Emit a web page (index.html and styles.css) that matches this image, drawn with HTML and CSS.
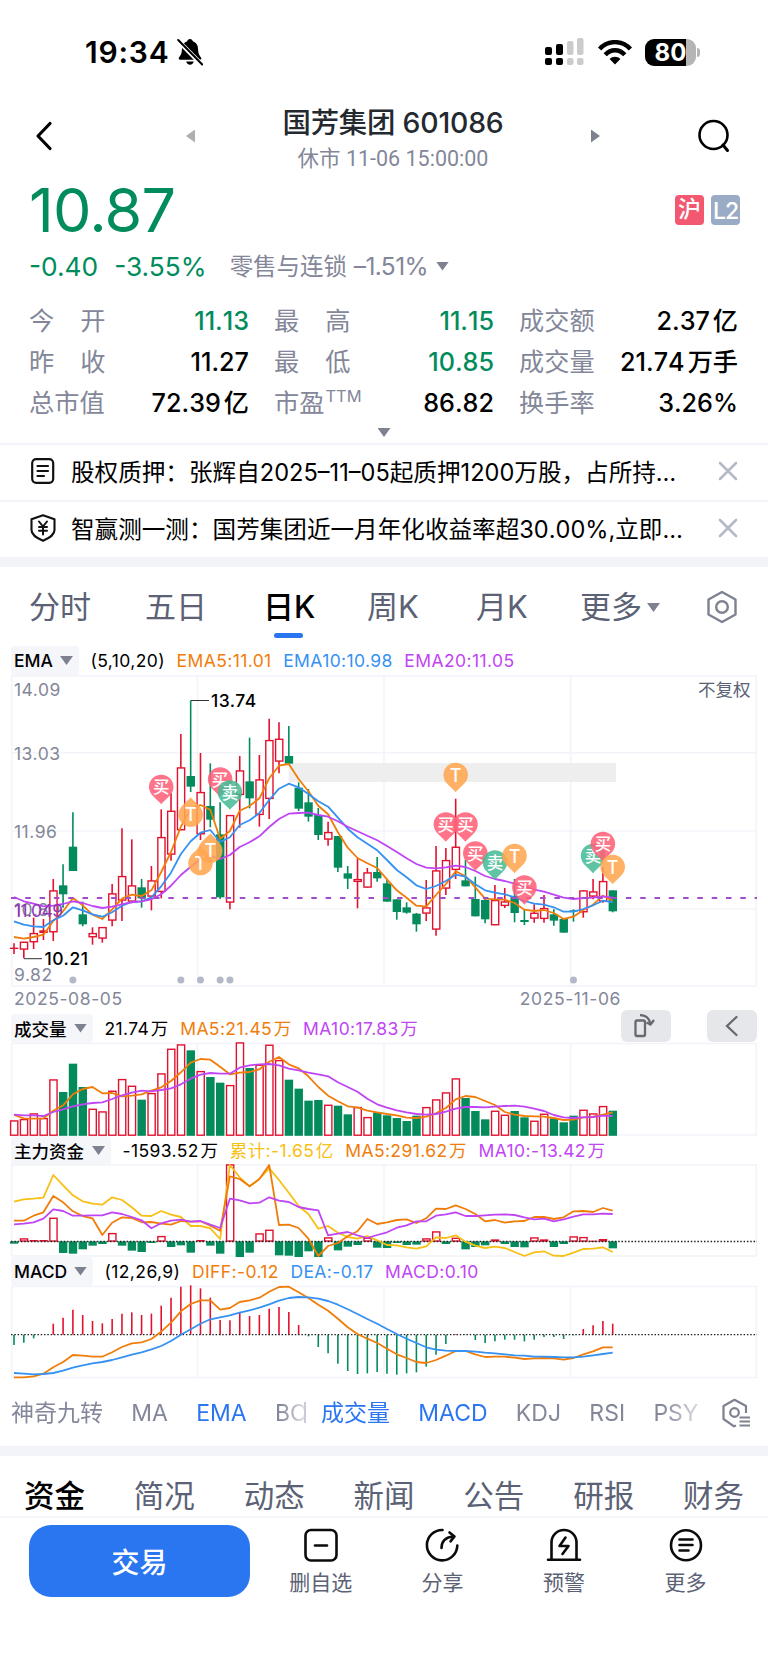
FILE: index.html
```html
<!DOCTYPE html>
<html lang="zh-CN">
<head>
    <meta charset="UTF-8">
    <meta name="viewport" content="width=device-width, initial-scale=1.0">
    <title>国芳集团 601086</title>
    <link rel="stylesheet" href="styles.css">
</head>
<body>
    <div class="status-bar">
        <span class="clock">19:34</span>
        <svg class="bell" width="26" height="28" viewBox="0 0 26 28">
            <path d="M13 1c1.600 0 2.600 1 2.800 2.300 3.600 1.200 5.200 4.200 5.300 8 .1 4.500 1.200 6 2.900 8.200.7 1.100.3 2.200-1.100 2.200H3.100c-1.400 0-1.800-1.100-1.100-2.200 1.700-2.200 2.800-3.700 2.900-8.200.1-3.800 1.700-6.800 5.300-8C10.400 2 11.400 1 13 1zM9.200 23.500h7.600c-.4 2-1.900 3.200-3.800 3.200s-3.400-1.200-3.800-3.200z"/>
            <path d="M1 2.500l23.500 24" stroke="#fff" stroke-width="4.500"/>
            <path d="M1.200 2l24 24.500" stroke="#000" stroke-width="2" stroke-linecap="round"/>
        </svg>
        <svg class="signal" width="40" height="28" viewBox="0 0 40 28">
            <g fill="#000"><rect x="0" y="9" width="7" height="8" rx="2"/><rect x="11" y="6" width="7" height="11" rx="2"/><rect x="0" y="20" width="7" height="7" rx="2"/><rect x="11" y="20" width="7" height="7" rx="2"/></g>
            <g fill="#cbcbcb"><rect x="22" y="3" width="6.500" height="14" rx="2"/><rect x="32" y="0" width="6.500" height="17" rx="2"/><rect x="22" y="20" width="6.500" height="7" rx="2"/><rect x="32" y="20" width="6.500" height="7" rx="2"/></g>
        </svg>
        <svg class="wifi" width="34" height="25" viewBox="0 0 34 25">
            <g fill="none" stroke="#000" stroke-width="4.400"><path d="M1.600 9C10-.2 24-.2 32.400 9"/><path d="M7.200 14.700c5.600-6 14-6 19.600 0"/></g>
            <path d="M17 24.500l-5.400-5.600c3-3 7.800-3 10.800 0z"/>
        </svg>
        <div class="battery"><span>80</span></div>
        <i class="battery-nub"></i>
    </div>

    <header class="title-bar">
        <svg class="back" width="18" height="30" viewBox="0 0 18 30"><path d="M15 2.500L3 15l12 12.500" fill="none" stroke="#000" stroke-width="3.200" stroke-linecap="round" stroke-linejoin="round"/></svg>
        <i class="tri-left"></i>
        <div class="stock">
            <h1>国芳集团 601086</h1>
            <p>休市 11-06 15:00:00</p>
        </div>
        <i class="tri-right"></i>
        <svg class="search" width="34" height="34" viewBox="0 0 34 34"><circle cx="16.500" cy="16" r="14" fill="none" stroke="#000" stroke-width="2.600"/><path d="M26 26l4.500 5.500" stroke="#000" stroke-width="3" stroke-linecap="round"/></svg>
    </header>

    <section class="price">
        <strong>10.87</strong>
        <span class="badge badge-hu">沪</span>
        <span class="badge badge-l2">L2</span>
    </section>
    <section class="change">
        <span class="down">-0.40</span>
        <span class="down percent">-3.55%</span>
        <span class="sector">零售与连锁 <b>–1.51%</b></span>
        <i class="tri-down"></i>
    </section>

    <section class="quotes">
        <div><label>今<i></i>开</label><span class="down">11.13</span></div>
        <div><label>最<i></i>高</label><span class="down">11.15</span></div>
        <div><label>成交额</label><span>2.37<em>亿</em></span></div>
        <div><label>昨<i></i>收</label><span>11.27</span></div>
        <div><label>最<i></i>低</label><span class="down">10.85</span></div>
        <div><label>成交量</label><span>21.74<em>万手</em></span></div>
        <div><label>总市值</label><span>72.39<em>亿</em></span></div>
        <div><label>市盈<sup>TTM</sup></label><span>86.82</span></div>
        <div><label>换手率</label><span>3.26%</span></div>
    </section>
    <div class="expand"><i class="tri-down"></i></div>

    <section class="notices">
        <div class="notice">
            <svg width="26" height="28" viewBox="0 0 26 28" fill="none" stroke="#111" stroke-width="2.200" stroke-linecap="round"><rect x="2.200" y="2.200" width="21" height="23.600" rx="4"/><path d="M7.500 9h10.500M7.500 14h10.500M7.500 19h6.500"/></svg>
            <p>股权质押：张辉自2025–11–05起质押1200万股，占所持…</p>
            <svg class="close" width="20" height="20" viewBox="0 0 20 20"><path d="M2 2l16 16M18 2L2 18" stroke="#b4b9c6" stroke-width="2.600" stroke-linecap="round"/></svg>
        </div>
        <div class="notice">
            <svg width="26" height="28" viewBox="0 0 26 28" fill="none" stroke="#111" stroke-width="2.100" stroke-linejoin="round" stroke-linecap="round"><path d="M13 1.200l11.500 4v10.800c0 4.500-3.500 7.200-11.500 10.800C5 23.200 1.500 20.500 1.500 16V5.200z"/><path d="M9 7.500l4 5 4-5M13 12.500v8M9 13h8M9 16.800h8" stroke-width="2"/></svg>
            <p>智赢测一测：国芳集团近一月年化收益率超30.00%,立即…</p>
            <svg class="close" width="20" height="20" viewBox="0 0 20 20"><path d="M2 2l16 16M18 2L2 18" stroke="#b4b9c6" stroke-width="2.600" stroke-linecap="round"/></svg>
        </div>
    </section>

    <nav class="periods">
        <span>分时</span>
        <span>五日</span>
        <span class="active">日K</span>
        <span>周K</span>
        <span>月K</span>
        <span>更多<i class="tri-down"></i></span>
        <svg width="32" height="34" viewBox="0 0 32 34" fill="none" stroke="#7d8190" stroke-width="2.400" stroke-linejoin="round"><path d="M16 2l13.500 7.500v15L16 32 2.500 24.500v-15z"/><circle cx="16" cy="17" r="5.800"/></svg>
    </nav>

    <div class="legend legend-ema">
        <span class="pill">EMA<i class="tri-down"></i></span>
        <span>(5,10,20)</span>
        <span class="orange">EMA5:11.01</span>
        <span class="blue">EMA10:10.98</span>
        <span class="purple">EMA20:11.05</span>
    </div>
    <svg id="kline" class="chart" width="768" height="312" viewBox="0 0 768 312"></svg>
    <div class="dates"><span>2025-08-05</span><span>2025-11-06</span></div>

    <div class="legend legend-vol">
        <span class="pill">成交量<i class="tri-down"></i></span>
        <span>21.74<em>万</em></span>
        <span class="orange">MA5:21.45<em>万</em></span>
        <span class="purple">MA10:17.83<em>万</em></span>
        <div class="tools">
            <button type="button"><svg width="28" height="26" viewBox="0 0 28 26" fill="none" stroke="#666a70" stroke-width="2.300"><rect x="3.500" y="7.500" width="9.500" height="15.500" rx="1.500"/><path d="M8 2.200c5.500 0 9 2.500 10.500 8.300M14.500 9.500l4 2 3.500-4.500"/></svg></button>
            <button type="button"><svg width="16" height="24" viewBox="0 0 16 24" fill="none" stroke="#666a70" stroke-width="2.300" stroke-linecap="round"><path d="M12.500 3L3 12l9.500 9"/></svg></button>
        </div>
    </div>
    <svg id="volume" class="chart" width="768" height="95" viewBox="0 0 768 95"></svg>

    <div class="legend legend-fund">
        <span class="pill">主力资金<i class="tri-down"></i></span>
        <span>-1593.52<em>万</em></span>
        <span class="yellow">累计:-1.65<em>亿</em></span>
        <span class="orange">MA5:291.62<em>万</em></span>
        <span class="purple">MA10:-13.42<em>万</em></span>
    </div>
    <svg id="fund" class="chart" width="768" height="93" viewBox="0 0 768 93"></svg>

    <div class="legend legend-macd">
        <span class="pill">MACD<i class="tri-down"></i></span>
        <span>(12,26,9)</span>
        <span class="orange">DIFF:-0.12</span>
        <span class="blue">DEA:-0.17</span>
        <span class="purple">MACD:0.10</span>
    </div>
    <svg id="macd" class="chart" width="768" height="94" viewBox="0 0 768 94"></svg>

    <nav class="indicators">
        <div class="group main-group">
            <span>神奇九转</span><span>MA</span><span class="active">EMA</span><span>BO</span>
        </div>
        <i class="divider"></i>
        <div class="group sub-group">
            <span class="active">成交量</span><span class="active">MACD</span><span>KDJ</span><span>RSI</span><span>PSY</span>
        </div>
        <svg width="30" height="30" viewBox="0 0 30 30" fill="none" stroke="#7d8190" stroke-width="2.200" stroke-linejoin="round"><path d="M15 27.500l-2 .8L2.500 21V8L13.500 1.800 25 8v7"/><circle cx="13.500" cy="14.500" r="4.300"/><path d="M18.500 19.500h10.500M18.500 23.500h10.500M18.500 27.500h10.500"/></svg>
    </nav>

    <nav class="sections">
        <span class="active">资金</span><span>简况</span><span>动态</span><span>新闻</span><span>公告</span><span>研报</span><span>财务</span>
    </nav>

    <footer>
        <button type="button" class="trade">交易</button>
        <div class="action">
            <svg viewBox="0 0 36 36"><rect x="2.500" y="3" width="31" height="30.500" rx="5.500"/><path d="M12 18.500h12"/></svg>
            <span>删自选</span>
        </div>
        <div class="action">
            <svg viewBox="0 0 36 36"><path d="M18.500 3A15.200 15.200 0 1 0 33.300 18.500"/><path d="M17.500 21c0-6 3-10.500 11.500-11.500M25.500 5.500l5 4-4 4.800"/></svg>
            <span>分享</span>
        </div>
        <div class="action">
            <svg viewBox="0 0 36 36"><path d="M5.500 32V15.500a12.500 12.500 0 0 1 25 0V32M2 32.800h32"/><path d="M19.500 10.500l-6 8.500h9l-6 8"/></svg>
            <span>预警</span>
        </div>
        <div class="action">
            <svg viewBox="0 0 36 36"><circle cx="18" cy="18.200" r="15"/><path d="M11.500 12.500h13M11.500 18h13M11.500 23.500h9"/></svg>
            <span>更多</span>
        </div>
    </footer>

    <script src="chart.js"></script>
</body>
</html>
```

FILE: styles.css
```css
* {
    box-sizing: border-box;
}
body {
    margin: 0;
    width: 768px;
    height: 1665px;
    overflow: hidden;
    background: #fff;
    color: #000;
    font-family: Inter, "Noto Sans CJK SC", sans-serif;
}
h1, p {
    margin: 0;
}
i, em {
    font-style: normal;
}
.down { color: #028c5c; }
.orange { color: #f07d0a; }
.blue { color: #3591f2; }
.purple { color: #bf45f5; }
.yellow { color: #f8bf14; }

.tri-down {
    display: inline-block;
    width: 13px;
    height: 9px;
    background: #7d8190;
    clip-path: polygon(0 0, 100% 0, 50% 100%);
}

/* status bar */
.status-bar {
    display: flex;
    align-items: center;
    height: 104px;
    padding-left: 85px;
}
.clock {
    width: 92px;
    font-size: 30px;
    font-weight: 600;
    letter-spacing: 0.8px;
}
.signal { margin-left: 342px; }
.wifi { margin-left: 13px; }
.battery {
    width: 51px;
    height: 27px;
    margin-left: 13px;
    border-radius: 9px;
    background: linear-gradient(to right, #000 41px, #b5b5b5 41px);
    color: #fff;
    font-size: 24px;
    font-weight: 700;
    line-height: 27px;
    text-align: center;
}
.battery-nub {
    width: 3px;
    height: 9px;
    margin-left: 1px;
    border-radius: 0 4px 4px 0;
    background: #b5b5b5;
}

/* title */
.title-bar {
    display: flex;
    align-items: center;
    height: 64px;
    margin-bottom: 6px;
    padding: 0 36px 0 35px;
}
.tri-left, .tri-right {
    width: 9px;
    height: 13px;
}
.tri-left {
    margin-left: 133px;
    background: #adafb5;
    clip-path: polygon(100% 0, 100% 100%, 0 50%);
}
.tri-right {
    background: #7d8190;
    clip-path: polygon(0 0, 100% 50%, 0 100%);
}
.stock {
    width: 396px;
    margin-top: 6px;
    text-align: center;
}
.stock h1 {
    color: #23292f;
    font-size: 28.4px;
    font-weight: 500;
    line-height: 36px;
    letter-spacing: -0.2px;
}
.stock p {
    margin-top: 4px;
    color: #838799;
    font-family: Roboto, "Noto Sans CJK SC", sans-serif;
    font-size: 21.5px;
    line-height: 28px;
}
.search { margin-left: 97px; }

/* price */
.price {
    display: flex;
    align-items: center;
    height: 72px;
    padding: 0 28px 0 29px;
}
.price strong {
    margin-right: auto;
    color: #028c5c;
    font-size: 61px;
    font-weight: 400;
    letter-spacing: -0.8px;
    line-height: 72px;
}
.badge {
    width: 29px;
    height: 30px;
    margin-left: 7px;
    border-radius: 4px;
    color: #fff;
    font-size: 23px;
    font-weight: 500;
    line-height: 29px;
    text-align: center;
}
.badge-hu { background: #f2586f; }
.badge-l2 { background: #9aabc6; letter-spacing: -1px; line-height: 32px; }

.change {
    display: flex;
    align-items: center;
    height: 40px;
    padding-left: 29px;
    font-size: 26.3px;
}
.change .percent { margin-left: 16px; }
.sector {
    margin: -2px 0 0 23px;
    color: #838799;
    font-size: 23.5px;
}
.sector b {
    font-size: 24.5px;
    font-weight: 400;
    letter-spacing: -0.6px;
}
.change .tri-down { margin-left: 8px; }

.quotes {
    display: grid;
    grid-template-columns: 220px 220px 219px;
    grid-auto-rows: 41px;
    column-gap: 25px;
    padding: 15px 29px 0 29px;
}
.quotes div {
    display: flex;
    align-items: center;
    justify-content: space-between;
    font-size: 25.2px;
    font-kerning: none;
    line-height: 41px;
    white-space: nowrap;
}
.quotes label { color: #838799; }
.quotes label i {
    display: inline-block;
    width: 26px;
}
.quotes label sup {
    position: relative;
    top: -10px;
    font-size: 16.5px;
    line-height: 0;
    vertical-align: baseline;
    margin-left: 1px;
}
.quotes div > span { font-weight: 500; }
.quotes em { margin-left: 3px; }
.expand {
    display: flex;
    justify-content: center;
    height: 19px;
    padding-top: 4px;
}

/* notices */
.notices {
    border-bottom: 10px solid #f3f4f9;
}
.notice {
    display: flex;
    align-items: center;
    height: 57px;
    border-top: 2px solid #f3f4fa;
    padding: 0 30px 4px 30px;
}
.notice p {
    width: 649px;
    margin-left: 15px;
    font-size: 23.6px;
    font-kerning: none;
    white-space: nowrap;
}
.notice .close { margin-left: -2px; }

/* period tabs */
.periods {
    display: grid;
    grid-template-columns: 116px 118px 104px 109px 104px 1fr auto;
    align-items: center;
    height: 79px;
    padding: 0 30px 4px 29px;
    color: #5c6275;
    font-size: 31px;
}
.periods .active {
    position: relative;
    color: #000;
    font-weight: 500;
}
.periods .active::after {
    content: "";
    position: absolute;
    left: 11px;
    bottom: -11px;
    width: 29px;
    height: 5px;
    border-radius: 3px;
    background: #2a75f0;
}
.periods .tri-down {
    margin-left: 5px;
    vertical-align: 6px;
}
.periods svg { margin-top: 4px; }

/* chart legends */
.legend {
    display: flex;
    align-items: center;
    height: 29px;
    padding-left: 11px;
    font-size: 17.5px;
    letter-spacing: 0.4px;
    white-space: nowrap;
}
.legend > span { margin-right: 11.5px; }
.legend em { margin-left: 1.5px; }
.legend .pill {
    display: flex;
    align-items: center;
    justify-content: space-between;
    height: 29px;
    padding: 0 6px 0 3px;
    border-radius: 4px;
    background: #f5f6fa;
    font-weight: 500;
    letter-spacing: 0;
}
.legend-ema .pill { width: 68px; }
.legend-vol .pill { width: 82px; }
.legend-fund .pill { width: 100px; }
.legend-macd .pill { width: 82px; }
.legend-vol, .legend-macd { height: 28px; }
.legend-fund { height: 27px; }
.legend-vol > span, .legend-fund > span { padding-bottom: 2px; }
.tools {
    display: flex;
    gap: 36px;
    height: 32px;
    margin: -4px 11px 0 auto;
}
.tools button {
    display: flex;
    align-items: center;
    justify-content: center;
    width: 50px;
    height: 32px;
    padding: 0;
    border: 0;
    border-radius: 6px;
    background: #e6e7ea;
}
.chart {
    display: block;
}
.chart text {
    font-size: 17.5px;
    letter-spacing: 0.5px;
}
.dates {
    display: flex;
    justify-content: space-between;
    height: 27px;
    padding: 0 147px 0 14px;
    color: #838799;
    font-size: 17.5px;
    line-height: 24px;
    letter-spacing: 0.6px;
}

/* indicator tabs */
.indicators {
    display: flex;
    align-items: center;
    height: 67px;
    padding-left: 11px;
    color: #838799;
    font-size: 23px;
}
.group {
    display: flex;
    gap: 28.3px;
    line-height: 36px;
    white-space: nowrap;
}
.group span { height: 36px; }
.indicators .active { color: #2a75f0; }
.main-group {
    width: 293px;
    -webkit-mask-image: linear-gradient(to right, #000 270px, rgba(0, 0, 0, 0.25) 293px);
}
.divider {
    width: 2px;
    height: 21px;
    background: #c9ccd6;
}
.sub-group {
    width: 384px;
    margin-left: 15px;
    -webkit-mask-image: linear-gradient(to right, #000 340px, rgba(0, 0, 0, 0.25) 380px);
}
.indicators svg { margin-left: 16px; }

.sections {
    display: flex;
    justify-content: space-between;
    height: 72px;
    padding: 0 24px;
    border-top: 10px solid #f3f4f9;
    border-bottom: 2px solid #f3f7fb;
    color: #5c6275;
    font-size: 30.5px;
    line-height: 79px;
}
.sections .active {
    color: #000;
    font-weight: 500;
}

footer {
    display: flex;
    padding: 7px 0 0 29px;
}
.trade {
    width: 221px;
    height: 72px;
    margin-right: 10px;
    padding: 0;
    border: 0;
    border-radius: 22px;
    background: #2a75f0;
    color: #fff;
    font-family: inherit;
    font-size: 28px;
    font-weight: 500;
}
.action {
    display: flex;
    flex-direction: column;
    align-items: center;
    width: 121.600px;
    padding-top: 2px;
    color: #5c6275;
    font-size: 21px;
    line-height: 30px;
}
.action svg {
    width: 36px;
    height: 36px;
    margin-bottom: 5px;
    fill: none;
    stroke: #0b0b0b;
    stroke-width: 2.600;
    stroke-linecap: round;
    stroke-linejoin: round;
}
```

FILE: chart.js
```js
// y values are device pixels at 3x, each panel has its own offset
const STEP = 9.815;
const RED = '#e2122f', GREEN = '#038b5c';
const ORANGE = '#f07d0a', BLUE = '#3591f2', PURPLE = '#bf45f5', YELLOW = '#f8bf14';
const X = i => 14 + STEP * i;

// color, body top, body bottom, high, low
const candles = [
    'r 533 537 520 552', 'r 515 539 515 565', 'r 489 517 443 537', 'r 481 489 447 510', 'r 361 487 327 513',
    'g 346 373 283 413', 'g 230 303 127 303', 'g 433 463 395 469', 'r 489 502 472 524', 'r 471 506 471 518',
    'r 370 452 342 469', 'r 318 392 175 453', 'r 346 395 208 400', 'g 352 385 327 413', 'r 331 380 288 421',
    'r 201 366 118 385', 'r 122 254 70 272', 'r -8 181 -108 181', 'g 18 50 -209 66', 'r 66 193 -51 210',
    'g 108 149 -20 172', 'g 193 382 97 387', 'r 135 398 135 418', 'r 1 75 -42 173', 'g 34 85 -97 115',
    'r 28 135 -45 170', 'r -90 87 -154 147', 'r -94 -25 -143 10', 'g -42 -19 -132 -19', 'g 53 116 37 123',
    'g 97 140 57 155', 'g 135 195 114 210', 'r 186 209 155 227', 'g 198 293 198 306', 'g 310 326 288 357',
    'r 327 336 265 415', 'r 307 353 294 353', 'g 306 325 261 335', 'g 340 395 327 395', 'g 388 426 388 449',
    'g 412 428 397 431', 'g 431 463 429 485', 'r 412 431 330 453', 'r 301 479 228 497', 'r 270 356 234 375',
    'r 230 300 86 327', 'g 331 349 270 349', 'g 387 439 320 439', 'g 390 448 385 460', 'r 390 466 345 466',
    'r 394 408 354 414', 'g 378 429 327 457', 'g 450 456 420 465', 'r 428 446 403 458', 'r 414 447 375 458',
    'g 433 452 418 467', 'g 447 488 447 488', 'g 421 424 418 455', 'r 361 427 361 443', 'r 364 380 327 388',
    'r 333 395 290 398', 'g 361 424 361 427'
].map(s => { const p = s.split(' '); return [p[0], ...p.slice(1).map(Number)]; });

const ema5 = [501,506,501,494,453,424,384,406,434,447,418,386,374,378,361,306,246,170,115,105,119,206,183,122,108,85,25,-13,-18,27,64,107,133,187,233,264,280,294,328,361,383,407,410,375,342,304,319,352,386,388,389,399,419,423,420,429,447,440,420,404,377,392];
const ema10 = [454,464,469,471,451,437,412,421,433,440,427,407,396,394,382,349,308,252,214,188,180,216,202,165,151,129,90,56,41,52,72,94,110,143,176,202,221,241,270,300,322,346,357,348,333,314,320,343,361,368,373,382,393,401,404,412,425,425,417,406,392,397];
const ema20 = [381,394,401,409,407,402,394,399,408,414,410,403,396,394,388,373,347,315,290,268,257,267,255,231,217,199,171,147,131,129,128,135,140,154,170,184,197,211,228,246,265,282,293,295,292,287,291,303,318,327,333,341,349,359,365,374,383,387,384,383,379,383];

const volume = [332,328,311,325,209,247,162,232,297,305,243,208,228,270,250,191,117,104,122,184,202,219,226,98,175,165,105,151,210,237,273,271,285,288,314,292,322,308,317,325,334,318,292,269,248,206,265,304,329,303,315,304,323,333,312,326,338,318,300,311,289,303];
const volMa5 = [315,325,326,325,302,286,253,237,231,250,249,259,257,253,242,232,213,187,158,147,149,170,193,188,186,178,155,141,163,175,199,231,257,274,289,292,302,307,312,316,323,324,320,310,294,268,258,261,273,285,306,314,318,319,320,324,330,329,322,320,314,307];
const volMa10 = [314,316,316,318,306,298,289,283,279,277,267,256,248,242,244,240,235,223,206,194,189,191,191,173,166,163,162,166,176,181,188,193,199,217,231,245,266,283,293,301,307,312,314,312,305,296,291,291,292,290,288,287,290,296,303,315,322,324,322,321,317,318];

const fund = [250,236,241,241,174,278,280,267,256,251,220,256,271,275,248,229,260,255,277,241,256,280,14,290,277,221,210,285,286,290,273,290,233,270,259,254,234,262,263,248,254,253,236,215,251,234,267,260,255,239,251,260,261,233,239,260,251,230,232,243,238,264];
const fundSum = [125,118,116,113,45,76,106,124,131,134,112,120,142,167,168,153,164,171,198,198,205,237,15,52,79,57,25,60,98,138,162,206,198,218,231,236,228,241,255,256,262,266,259,232,234,226,245,257,264,260,264,276,288,277,274,287,288,278,267,266,262,276];
const fundMa5 = [182,182,167,157,108,127,154,168,175,225,188,172,174,187,186,191,194,183,185,184,197,212,49,57,79,57,15,195,194,204,236,288,258,249,229,214,177,192,187,180,178,189,175,146,147,136,147,162,184,180,188,184,183,171,171,177,172,154,153,156,144,152];
const fundMa10 = [193,191,187,176,148,153,167,167,166,166,157,162,171,181,205,190,182,179,185,183,194,204,116,121,130,128,112,122,126,141,147,151,226,221,216,226,234,225,217,203,196,184,184,167,163,157,168,168,166,164,163,165,172,178,176,184,178,170,163,163,161,162];

const macd = [555,548,535,524,491,473,449,465,483,490,477,461,457,465,461,437,413,380,376,385,413,480,481,458,468,465,446,441,456,495,529,561,580,611,633,642,640,636,641,644,640,637,620,584,552,522,525,540,549,544,539,539,544,539,531,531,537,526,507,496,483,491];
const diff = [652,652,649,641,622,606,585,587,590,590,577,561,550,547,537,515,488,454,432,421,421,449,444,426,421,413,395,381,380,397,414,434,452,476,502,522,536,549,566,583,594,606,609,600,587,573,573,583,591,590,590,593,597,595,594,595,599,594,583,574,562,562];
const dea = [639,641,643,642,639,632,623,616,610,606,600,592,584,577,568,558,543,524,508,491,478,472,466,458,451,443,433,422,414,411,412,416,423,434,448,462,477,491,507,522,536,549,562,569,572,573,573,575,578,580,583,586,587,590,590,591,592,592,590,586,582,578];

const line = (x1, y1, x2, y2, c, w, extra = '') =>
    `<line x1="${x1}" y1="${y1}" x2="${x2}" y2="${y2}" stroke="${c}" stroke-width="${w}" ${extra}/>`;
const text = (x, y, s, c, extra = '') => `<text x="${x}" y="${y}" fill="${c}" ${extra}>${s}</text>`;
const curve = (data, y, c) =>
    `<polyline points="${data.map((v, i) => X(i).toFixed(1) + ',' + y(v).toFixed(1)).join(' ')}" fill="none" stroke="${c}" stroke-width="1.8" stroke-linejoin="round"/>`;

function box(c, i, top, bottom) {
    const h = Math.max(bottom - top, 1.2);
    if (c === 'g') return `<rect x="${X(i) - 4.1}" y="${top}" width="8.4" height="${h}" fill="${GREEN}"/>`;
    if (h < 3) return `<rect x="${X(i) - 4.1}" y="${top}" width="8.4" height="${h}" fill="${RED}"/>`;
    return `<rect x="${X(i) - 3.4}" y="${top + 0.6}" width="7.2" height="${h - 1.2}" fill="#fff" stroke="${RED}" stroke-width="1.4"/>`;
}

function grid(top, bottom, rows = []) {
    let s = `<rect x="11.700" y="${top}" width="744.600" height="${bottom - top}" fill="none" stroke="#f3f4fa" stroke-width="1.6"/>`;
    [197.5, 384, 570.7].forEach(x => s += line(x, top, x, bottom, '#f3f4fa', 1.6));
    rows.forEach(y => s += line(11.5, y, 756.5, y, '#f3f4fa', 1.6));
    return s;
}

function pin(i, cy, word, up) {
    const color = { '买': '#ff5f78', '卖': '#46bb95', 'T': '#ffa54f' }[word];
    const x = X(i);
    const shape = 'M0 17.300C-3.500 12.500-12.300 8-12.300 0A12.300 12.300 0 0 1 12.300 0C12.300 8 3.500 12.500 0 17.300z';
    return `<g transform="translate(${x} ${cy})"><path d="${shape}" fill="${color}" fill-opacity="0.87" ${up ? 'transform="scale(1 -1)"' : ''}/>`
        + `<text y="${word === 'T' ? 6.7 : 6.4}" text-anchor="middle" fill="#fff" style="font-size:${word === 'T' ? 18 : 16.5}px;letter-spacing:0;font-weight:500">${word}</text></g>`;
}

function drawKline() {
    const y = v => v / 3 + 95;
    let s = grid(0.8, 311, [77.7, 156, 234]);
    s += `<rect x="288.700" y="88" width="327.300" height="19" fill="#eee"/>`;
    ['14.09', '13.03', '11.96', '10.89', '9.82'].forEach((t, i) => s += text(14, [20.5, 84.5, 162.5, 240.5, 306][i], t, '#838799'));
    candles.forEach(([c, top, bottom, high, low], i) => {
        s += line(X(i), y(high), X(i), y(low), c === 'r' ? RED : GREEN, 1.6);
        s += box(c, i, y(top), y(bottom));
    });
    s += curve(ema5, y, ORANGE) + curve(ema10, y, BLUE) + curve(ema20, y, PURPLE);
    s += line(11, 223, 757, 223, '#a24cc8', 1.8, 'stroke-dasharray="5.5 8.800"');
    s += text(14, 241.5, '11.049', '#8f36b8', 'style="letter-spacing:-0.6px"');
    s += line(191, 25.5, 209, 25.5, '#333', 1) + text(211, 31.5, '13.74', '#000', 'font-weight="500"');
    s += line(24, 283.7, 42, 283.7, '#333', 1) + text(44.5, 290, '10.21', '#000', 'font-weight="500"');
    s += text(698, 20.5, '不复权', '#5c6275', 'style="letter-spacing:0"');
    [6, 17, 19, 21, 22, 57].forEach(i => s += `<circle cx="${X(i)}" cy="305" r="3.500" fill="#b3b9c8"/>`);
    [[15, 112, '买'], [18, 139.5, 'T', 1], [19, 188, 'T', 1], [20, 175.5, 'T', 1], [21, 104.5, '买'], [22, 117.5, '卖'],
     [45, 100, 'T'], [44, 149.5, '买'], [46, 149.5, '买'], [47, 178.5, '买'], [49, 187.5, '卖'], [51, 181, 'T'],
     [52, 212.5, '买'], [59, 181, '卖'], [60, 169, '买'], [61, 192, 'T']].forEach(p => s += pin(...p));
    document.getElementById('kline').innerHTML = s;
}

function drawVolume() {
    const y = v => v / 3 - 32;
    let s = grid(1.5, 93);
    volume.forEach((v, i) => s += box(candles[i][0], i, y(v - 1), 93.8));
    s += curve(volMa5, y, ORANGE) + curve(volMa10, y, PURPLE);
    document.getElementById('volume').innerHTML = s;
}

function drawFund() {
    const y = v => v / 3 - 4;
    let s = grid(0.8, 92);
    fund.forEach((v, i) => s += v < 245 ? box('r', i, y(v - 1), y(245)) : box('g', i, y(244), y(v + 1)));
    s += line(11, y(244.5), 757, y(244.5), '#222', 1.4, 'stroke-dasharray="1.500 1.800"');
    s += curve(fundSum, y, YELLOW) + curve(fundMa5, y, ORANGE) + curve(fundMa10, y, PURPLE);
    document.getElementById('fund').innerHTML = s;
}

function drawMacd() {
    const y = v => v / 3 - 125;
    let s = grid(1.5, 92.5);
    macd.forEach((v, i) => s += line(X(i), y(524), X(i), y(v), v < 524 ? RED : GREEN, 1.6));
    s += line(11, y(524), 757, y(524), '#222', 1.4, 'stroke-dasharray="1.500 1.800"');
    s += curve(diff, y, ORANGE) + curve(dea, y, BLUE);
    document.getElementById('macd').innerHTML = s;
}

drawKline();
drawVolume();
drawFund();
drawMacd();
```
